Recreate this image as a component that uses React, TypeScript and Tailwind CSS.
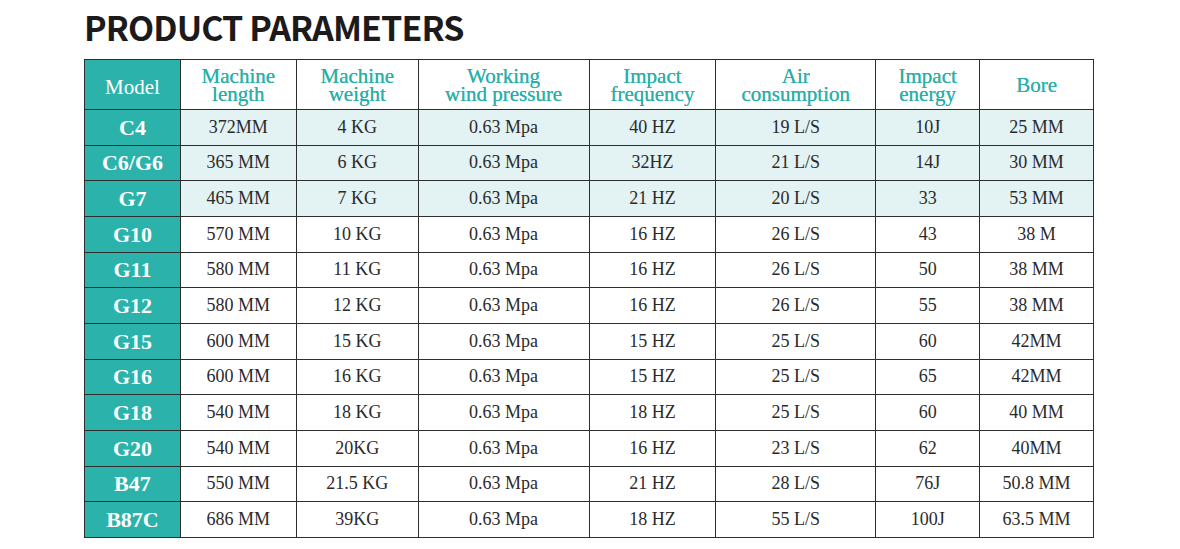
const cols = ["w-[96px]", "w-[116px]", "w-[122px]", "w-[171px]", "w-[127px]", "w-[160px]", "w-[104px]", "w-[114px]"];

const headers: string[][] = [
  ["Machine", "length"],
  ["Machine", "weight"],
  ["Working", "wind pressure"],
  ["Impact", "frequency"],
  ["Air", "consumption"],
  ["Impact", "energy"],
  ["Bore"],
];

const rows: string[][] = [
  ["C4", "372MM", "4 KG", "0.63 Mpa", "40 HZ", "19 L/S", "10J", "25 MM"],
  ["C6/G6", "365 MM", "6 KG", "0.63 Mpa", "32HZ", "21 L/S", "14J", "30 MM"],
  ["G7", "465 MM", "7 KG", "0.63 Mpa", "21 HZ", "20 L/S", "33", "53 MM"],
  ["G10", "570 MM", "10 KG", "0.63 Mpa", "16 HZ", "26 L/S", "43", "38 M"],
  ["G11", "580 MM", "11 KG", "0.63 Mpa", "16 HZ", "26 L/S", "50", "38 MM"],
  ["G12", "580 MM", "12 KG", "0.63 Mpa", "16 HZ", "26 L/S", "55", "38 MM"],
  ["G15", "600 MM", "15 KG", "0.63 Mpa", "15 HZ", "25 L/S", "60", "42MM"],
  ["G16", "600 MM", "16 KG", "0.63 Mpa", "15 HZ", "25 L/S", "65", "42MM"],
  ["G18", "540 MM", "18 KG", "0.63 Mpa", "18 HZ", "25 L/S", "60", "40 MM"],
  ["G20", "540 MM", "20KG", "0.63 Mpa", "16 HZ", "23 L/S", "62", "40MM"],
  ["B47", "550 MM", "21.5 KG", "0.63 Mpa", "21 HZ", "28 L/S", "76J", "50.8 MM"],
  ["B87C", "686 MM", "39KG", "0.63 Mpa", "18 HZ", "55 L/S", "100J", "63.5 MM"],
];

export default function App() {
  return (
    <div className="h-[549px] w-[1180px] bg-white pl-[84px] pt-[8px]">
      <h1 className="font-['Noto_Sans_CJK_SC','Noto_Sans',sans-serif] text-[34px] font-bold leading-[38px] tracking-[-0.9px] text-[#1c1a1a]">
        PRODUCT PARAMETERS
      </h1>

      <div className="mt-[13px] w-[1010px] border-l border-t border-[#2e2e2e] font-['Liberation_Serif',serif]">
        {/* Header */}
        <div className="flex h-[50px]">
          <div className={`${cols[0]} flex items-center justify-center border-b border-r border-[#2e2e2e] bg-[#2bb3ab] pt-[6px] text-[21px] text-white`}>
            Model
          </div>
          {headers.map((h, i) => (
            <div
              key={i}
              className={`${cols[i + 1]} flex flex-col items-center justify-center border-b border-r border-[#2e2e2e] pt-[1px] text-[21px] leading-[18px] text-[#2bb0a8] [text-shadow:0_0_0.4px_#2bb0a8]`}
            >
              {h.map((line) => (
                <span key={line} className="whitespace-nowrap">{line}</span>
              ))}
            </div>
          ))}
        </div>

        {/* Rows */}
        {rows.map((r, ri) => (
          <div key={ri} className={`flex h-[35.67px] ${ri < 3 ? "bg-[#e3f2f3]" : "bg-white"}`}>
            {r.map((cell, ci) =>
              ci === 0 ? (
                <div
                  key={ci}
                  className={`${cols[0]} flex items-center justify-center border-b border-r border-[#2e2e2e] bg-[#2bb3ab] text-[22px] font-bold text-white`}
                >
                  {cell}
                </div>
              ) : (
                <div
                  key={ci}
                  className={`${cols[ci]} flex items-center justify-center border-b border-r border-[#2e2e2e] text-[18px] text-[#2a2a2a]`}
                >
                  {cell}
                </div>
              )
            )}
          </div>
        ))}
      </div>
    </div>
  );
}
